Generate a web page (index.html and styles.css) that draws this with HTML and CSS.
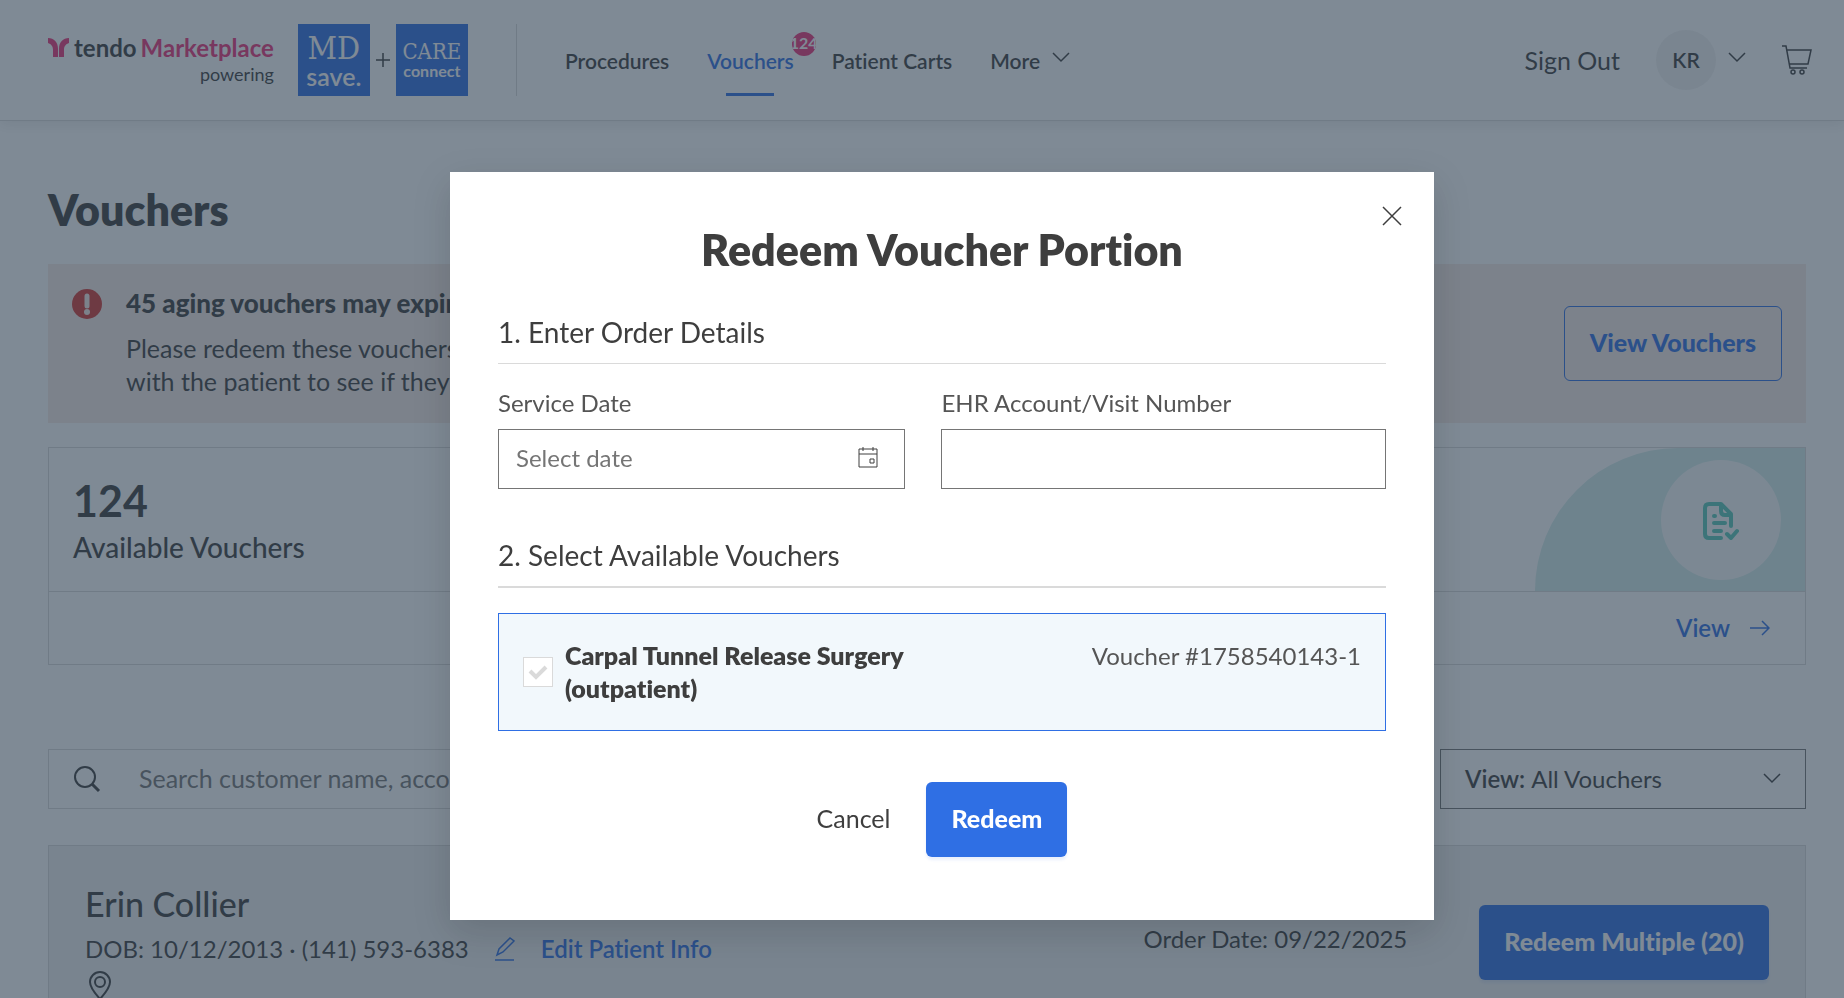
FILE: index.html
```html
<!DOCTYPE html>
<html lang="en">
<head>
    <meta charset="UTF-8">
    <meta name="viewport" content="width=device-width, initial-scale=1.0">
    <title>Vouchers</title>
    <link rel="stylesheet" href="styles.css">
</head>
<body>
    <header class="site-header">
        <a class="logo" href="#">
            <span class="logo-words">
                <span class="logo-line">
                    <svg width="22" height="20" viewBox="0 0 22 20" fill="#ee3278">
                        <path d="M0 0C6 0 10 4 10 11V19H5V12C5 8 3 6 0 5Z"/>
                        <path d="M21 0C15 0 11 4 11 11V19H16V12C16 8 18 6 21 5Z"/>
                    </svg>
                    <span class="logo-tendo">tendo</span>
                    <span class="logo-market">Marketplace</span>
                </span>
                <span class="logo-powering">powering</span>
            </span>
            <span class="logo-box">
                <span class="logo-md">MD</span>
                <span class="logo-save">save.</span>
            </span>
            <svg class="logo-plus" width="14" height="14" viewBox="0 0 14 14" stroke="#3e3e3e" stroke-width="1.5">
                <path d="M7 0V14M0 7H14"/>
            </svg>
            <span class="logo-box">
                <span class="logo-care">CARE</span>
                <span class="logo-connect">connect</span>
            </span>
        </a>
        <nav class="main-nav">
            <a href="#">Procedures</a>
            <a class="active" href="#">Vouchers<span class="badge">124</span></a>
            <a href="#">Patient Carts</a>
            <button type="button" class="more">More
                <svg width="18" height="11" viewBox="0 0 18 11" fill="none" stroke="#3e3e3e" stroke-width="1.5">
                    <path d="M1 1L9 9L17 1"/>
                </svg>
            </button>
        </nav>
        <div class="account">
            <a class="sign-out" href="#">Sign Out</a>
            <button type="button" class="user" aria-label="Account menu">
                <span class="avatar">KR</span>
                <svg width="18" height="11" viewBox="0 0 18 11" fill="none" stroke="#3e3e3e" stroke-width="1.5">
                    <path d="M1 1L9 9L17 1"/>
                </svg>
            </button>
            <a class="cart" href="#" aria-label="Cart">
                <svg width="30" height="30" viewBox="0 0 30 30" fill="none" stroke="#3e3e3e" stroke-width="1.5">
                    <path d="M0 1H4L8 23H25M5 5H29L26 19H7"/>
                    <circle cx="11" cy="27" r="2"/>
                    <circle cx="20" cy="27" r="2"/>
                </svg>
            </a>
        </div>
    </header>

    <main class="page">
        <h1>Vouchers</h1>

        <section class="alert">
            <svg class="alert-icon" width="30" height="30" viewBox="0 0 30 30">
                <circle cx="15" cy="15" r="15" fill="#d43734"/>
                <path d="M15 7V17" stroke="#f7ebe6" stroke-width="5" stroke-linecap="round"/>
                <circle cx="15" cy="23" r="3" fill="#f7ebe6"/>
            </svg>
            <div class="alert-text">
                <h2>45 aging vouchers may expire soon</h2>
                <p>Please redeem these vouchers or follow up<br>with the patient to see if they still need care.</p>
            </div>
            <button type="button" class="btn-outline">View Vouchers</button>
        </section>

        <section class="stat">
            <div class="stat-top">
                <div class="stat-text">
                    <p class="stat-number">124</p>
                    <p class="stat-label">Available Vouchers</p>
                </div>
                <div class="stat-art">
                    <span class="stat-circle">
                        <svg width="36" height="38" viewBox="0 0 36 38" fill="none" stroke="#58c9b8" stroke-width="4" stroke-linecap="round" stroke-linejoin="round">
                            <path d="M18 36H6Q2 36 2 32V6Q2 2 6 2H18L28 12V24"/>
                            <path d="M18 3V9Q18 13 22 13H27"/>
                            <path d="M11 14H12M11 21H22M11 29H18M24 32L28 36L34 29"/>
                        </svg>
                    </span>
                </div>
            </div>
            <div class="stat-bottom">
                <a href="#">View
                    <svg width="20" height="16" viewBox="0 0 20 16" fill="none" stroke="#2f6fe4" stroke-width="1.5">
                        <path d="M0 8H19M12 1L19 8L12 15"/>
                    </svg>
                </a>
            </div>
        </section>

        <div class="filters">
            <label class="search">
                <svg width="27" height="27" viewBox="0 0 27 27" fill="none" stroke="#3e3e3e" stroke-width="2">
                    <circle cx="11" cy="11" r="10"/>
                    <path d="M18 18L25 25" stroke-width="3"/>
                </svg>
                <input type="text" placeholder="Search customer name, account number" aria-label="Search customers">
            </label>
            <label class="view-filter">
                <span>View:</span>
                <select>
                    <option>All Vouchers</option>
                    <option>Aging Vouchers</option>
                </select>
                <svg width="18" height="11" viewBox="0 0 18 11" fill="none" stroke="#3e3e3e" stroke-width="1.5">
                    <path d="M1 1L9 9L17 1"/>
                </svg>
            </label>
        </div>

        <section class="patient">
            <div class="patient-info">
                <h2>Erin Collier</h2>
                <div class="patient-row">
                    <span>DOB: 10/12/2013 · (141) 593-6383</span>
                    <a href="#">
                        <svg width="20" height="24" viewBox="0 0 20 24" fill="none" stroke="#2f6fe4" stroke-width="1.5">
                            <path d="M2 18L4 12L15 1L19 4L8 15Z"/>
                            <path d="M0 23H19"/>
                        </svg>
                        Edit Patient Info
                    </a>
                </div>
                <svg class="pin" width="22" height="30" viewBox="0 0 22 30" fill="none" stroke="#3e3e3e" stroke-width="2">
                    <path d="M11 28Q1 17 1 11A10 10 0 0 1 21 11Q21 17 11 28Z"/>
                    <circle cx="11" cy="11" r="5"/>
                </svg>
            </div>
            <p class="order-date">Order Date: 09/22/2025</p>
            <button type="button" class="btn-primary">Redeem Multiple (20)</button>
        </section>
    </main>

    <div class="overlay">
        <form class="modal" role="dialog" aria-labelledby="modalTitle">
            <button type="button" class="close" aria-label="Close">
                <svg width="20" height="20" viewBox="0 0 20 20" stroke="#3e3e3e" stroke-width="1.5">
                    <path d="M1 1L19 19M19 1L1 19"/>
                </svg>
            </button>
            <h2 id="modalTitle">Redeem Voucher Portion</h2>
            <h3 class="step">1. Enter Order Details</h3>
            <div class="fields">
                <div class="field">
                    <label for="serviceDate">Service Date</label>
                    <div class="date-box">
                        <input type="text" id="serviceDate" placeholder="Select date">
                        <svg width="20" height="22" viewBox="0 0 20 22" fill="none" stroke="#3e3e3e">
                            <path d="M1 3H19V21H1ZM1 8H19M5 1V5M15 1V5M12 13H16V17H12Z"/>
                        </svg>
                    </div>
                </div>
                <div class="field">
                    <label for="visitNumber">EHR Account/Visit Number</label>
                    <input type="text" id="visitNumber">
                </div>
            </div>
            <h3 class="step step-two">2. Select Available Vouchers</h3>
            <div class="voucher">
                <span class="check">
                    <input type="checkbox" id="voucherCheck">
                    <svg width="20" height="16" viewBox="0 0 20 16" fill="none" stroke="#dadada" stroke-width="4">
                        <path d="M2 7L8 13L18 3"/>
                    </svg>
                </span>
                <label for="voucherCheck">Carpal Tunnel Release Surgery<br>(outpatient)</label>
                <span class="voucher-number">Voucher #1758540143-1</span>
            </div>
            <div class="actions">
                <button type="button" class="btn-text">Cancel</button>
                <button type="submit" class="btn-primary">Redeem</button>
            </div>
        </form>
    </div>
</body>
</html>
```
FILE: styles.css
```css
* {
    box-sizing: border-box;
}
body {
    margin: 0;
    height: 100vh;
    overflow: hidden;
    background-color: white;
    color: #3e3e3e;
    font-family: Lato, "Open Sans", sans-serif;
    font-size: 25px;
    line-height: 33px;
    font-variant-ligatures: none;
}
h1, h2, h3, p {
    margin: 0;
}
a {
    color: inherit;
    text-decoration: none;
}
button, input, select {
    font: inherit;
    font-variant-ligatures: none;
    color: inherit;
    border: none;
    background: none;
    padding: 0;
    margin: 0;
    border-radius: 0;
}
input::placeholder {
    color: #757575;
    opacity: 1;
}
svg {
    flex: none;
}

/* header */
.site-header {
    display: flex;
    align-items: center;
    height: 121px;
    padding: 0 32px 0 48px;
    border-bottom: 1px solid #dadada;
    box-shadow: 0 4px 12px rgba(0, 0, 0, 0.08);
}
.logo {
    display: flex;
    align-items: center;
    padding-right: 48px;
    border-right: 1px solid #dadada;
}
.logo-words {
    display: flex;
    flex-direction: column;
    align-items: flex-end;
    margin-right: 24px;
}
.logo-line {
    display: flex;
    align-items: center;
    gap: 4px;
    font-size: 24px;
    font-weight: bold;
    line-height: 28px;
}
.logo-market {
    color: #ee3278;
}
.logo-powering {
    font-size: 18px;
    line-height: 24px;
}
.logo-box {
    display: flex;
    flex-direction: column;
    align-items: center;
    justify-content: center;
    width: 72px;
    height: 72px;
    background-color: #2f6fe4;
    color: white;
}
.logo-plus {
    margin: 0 6px;
}
.logo-md, .logo-care {
    font-family: "DejaVu Serif Condensed", "DejaVu Serif", serif;
}
.logo-md {
    font-size: 32px;
    line-height: 32px;
}
.logo-save {
    font-size: 25px;
    font-weight: 600;
    line-height: 24px;
}
.logo-care {
    font-size: 22px;
    line-height: 22px;
}
.logo-connect {
    font-size: 16px;
    font-weight: bold;
    line-height: 16px;
}
.main-nav {
    display: flex;
    align-items: center;
    gap: 38px;
    margin-left: 48px;
    font-size: 21px;
    font-weight: 600;
}
.main-nav .active {
    position: relative;
    color: #2f6fe4;
}
.main-nav .active::after {
    content: "";
    position: absolute;
    left: 50%;
    bottom: -19px;
    width: 48px;
    height: 3px;
    margin-left: -24px;
    background-color: #2f6fe4;
}
.badge {
    position: absolute;
    top: -12px;
    right: -22px;
    display: flex;
    justify-content: center;
    width: 24px;
    height: 24px;
    border-radius: 50%;
    overflow: hidden;
    background-color: #ee3278;
    color: white;
    font-size: 16px;
    font-weight: bold;
    line-height: 22px;
}
.more, .user {
    display: flex;
    align-items: center;
    gap: 12px;
}
.more {
    font-weight: 600;
}
.more svg, .user svg {
    margin-bottom: 6px;
}
.account {
    display: flex;
    align-items: center;
    gap: 36px;
    margin-left: auto;
}
.avatar {
    width: 60px;
    border-radius: 50%;
    background-color: #f3f3f3;
    font-size: 21px;
    font-weight: 600;
    line-height: 60px;
    text-align: center;
}
.cart {
    display: flex;
}

/* page */
.page {
    padding: 0 38px 0 48px;
}
h1, #modalTitle {
    font-size: 43px;
    font-weight: 800;
    line-height: 54px;
}
h1 {
    padding: 62px 0 27px;
}
.alert {
    display: flex;
    align-items: flex-start;
    min-height: 159px;
    padding: 23px 24px;
    background-color: #f7ebe6;
}
.alert-icon {
    margin: 2px 24px 0 0;
}
.alert-text {
    flex: 1;
}
.alert-text h2 {
    margin-bottom: 12px;
    font-size: 26px;
    font-weight: 900;
}
.btn-outline, .btn-primary {
    height: 75px;
    padding: 0 25px 2px;
    border-radius: 6px;
    font-weight: 900;
    white-space: nowrap;
}
.btn-outline {
    align-self: center;
    border: 1px solid #2f6fe4;
    color: #2f6fe4;
}
.btn-primary {
    background-color: #2f6fe4;
    color: white;
    box-shadow: 0 3px 3px rgba(47, 111, 228, 0.1);
}
.btn-text {
    padding-bottom: 2px;
}
.stat {
    margin-top: 24px;
    border: 1px solid #dadada;
}
.stat-top {
    display: flex;
    justify-content: space-between;
    border-bottom: 1px solid #dadada;
}
.stat-text {
    padding: 23px 24px;
    height: 143px;
}
.stat-number {
    font-size: 43px;
    font-weight: bold;
    line-height: 60px;
}
.stat-label {
    font-size: 28px;
    font-weight: 500;
}
.stat-art {
    display: flex;
    align-items: center;
    justify-content: flex-end;
    width: 270px;
    padding-right: 24px;
    border-top-left-radius: 143px;
    background-color: #d4edeb;
}
.stat-circle {
    display: flex;
    align-items: center;
    justify-content: center;
    width: 120px;
    height: 120px;
    padding-top: 3px;
    border-radius: 50%;
    background-color: #f8fbfa;
}
.stat-bottom {
    display: flex;
    justify-content: flex-end;
    padding: 19px 35px 20px;
    color: #2f6fe4;
    font-size: 24px;
    font-weight: 600;
}
.stat-bottom a {
    display: flex;
    align-items: center;
    gap: 20px;
}
.filters {
    display: flex;
    justify-content: space-between;
    gap: 36px;
    margin: 84px 0 36px;
}
.search, .view-filter {
    display: flex;
    align-items: center;
    height: 60px;
    padding: 0 25px;
    border: 1px solid #dadada;
}
.search {
    flex: 1;
}
.search input {
    flex: 1;
    margin-left: 38px;
    padding-bottom: 2px;
}
.view-filter {
    width: 366px;
    gap: 6px;
    padding: 0 24px 2px;
    border-color: #757575;
    font-size: 24px;
}
.view-filter span {
    font-weight: 600;
}
.view-filter select {
    flex: 1;
    appearance: none;
}
.patient {
    display: flex;
    align-items: flex-start;
    padding: 38px 36px;
    border: 1px solid #dadada;
    background-color: #f0f0f0;
}
.patient-info {
    flex: 1;
}
.patient h2 {
    margin-bottom: 8px;
    font-size: 34px;
    font-weight: 500;
    line-height: 40px;
}
.patient-row, .patient-row a {
    display: flex;
    align-items: center;
    gap: 26px;
}
.patient-row, .order-date {
    font-size: 24px;
}
.patient-row a {
    color: #2f6fe4;
    font-weight: 600;
}
.pin {
    display: block;
    margin: 6px 0 0 4px;
}
.order-date {
    margin: 38px 72px 0 0;
}
.patient .btn-primary {
    margin-top: 21px;
}

/* modal */
.overlay {
    position: fixed;
    top: 0;
    right: 0;
    bottom: 0;
    left: 0;
    display: flex;
    align-items: flex-start;
    justify-content: center;
    padding: 172px 0 0 40px;
    background-color: rgba(42, 60, 78, 0.6);
}
.modal {
    position: relative;
    width: 984px;
    max-width: 90%;
    padding: 51px 48px 63px;
    background-color: white;
    box-shadow: 0 12px 36px rgba(0, 0, 0, 0.15);
}
.close {
    position: absolute;
    top: 34px;
    right: 32px;
    display: flex;
}
#modalTitle {
    margin-bottom: 37px;
    text-align: center;
}
.step {
    padding-bottom: 13px;
    border-bottom: 1px solid #dadada;
    font-size: 28px;
    font-weight: normal;
    line-height: 36px;
}
.fields {
    display: grid;
    grid-template-columns: 11fr 12fr;
    gap: 36px;
    margin: 22px 0 48px;
}
.field {
    display: flex;
    flex-direction: column;
    gap: 10px;
    color: #555;
    font-size: 24px;
}
.field input {
    width: 100%;
    height: 60px;
    padding: 0 17px 3px;
    border: 1px solid #757575;
}
.date-box {
    display: flex;
    align-items: center;
    border: 1px solid #757575;
    padding-right: 26px;
}
.date-box input {
    height: 58px;
    border: none;
}
.date-box svg {
    margin-bottom: 4px;
}
.step-two {
    border-bottom-width: 2px;
}
.voucher {
    display: flex;
    align-items: flex-start;
    margin-top: 25px;
    padding: 25px 24px;
    min-height: 118px;
    border: 1px solid #2f6fe4;
    background-color: #f2f8fc;
}
.check {
    display: grid;
    align-self: center;
    place-items: center;
    margin-right: 12px;
}
.check input, .check svg {
    grid-area: 1 / 1;
}
.check input {
    appearance: none;
    width: 30px;
    height: 30px;
    border: 1px solid #dadada;
    background-color: white;
}
.check svg {
    pointer-events: none;
}
.voucher label {
    font-weight: 800;
}
.voucher-number {
    margin-left: auto;
    color: #555;
    font-size: 24px;
}
.actions {
    display: flex;
    justify-content: center;
    gap: 36px;
    margin-top: 51px;
}
```
